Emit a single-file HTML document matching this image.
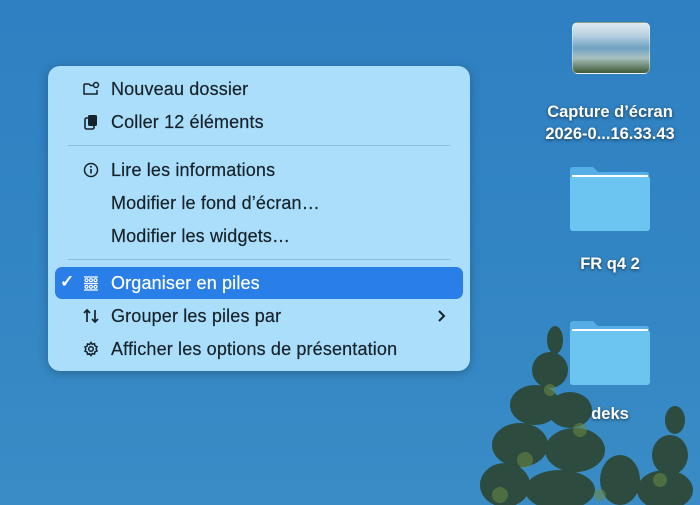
<!DOCTYPE html>
<html><head><meta charset="utf-8"><style>
body{margin:0;width:700px;height:505px;overflow:hidden;position:relative;font-family:"Liberation Sans",sans-serif;background:linear-gradient(180deg,#2f80c2 0%,#3285c3 50%,#3a8cc6 100%)}
.menu{position:absolute;left:48px;top:66px;width:422px;height:305px;background:#abdefa;border-radius:12px;box-shadow:0 2px 10px rgba(0,0,0,.25)}
.it{position:absolute;left:63px;font-size:18px;letter-spacing:0.15px;color:#17232b;height:22px;line-height:22px;-webkit-text-stroke:0.2px #17232b}
.ic{position:absolute;left:34px;width:18px;height:18px}
.sep{position:absolute;left:20px;right:20px;height:1px;background:#8fbcd6}
.hl{position:absolute;left:7px;top:201px;width:408px;height:32px;background:#2a7ee8;border-radius:7px}
.lbl{position:absolute;color:#fff;font-weight:bold;font-size:16.5px;text-align:center;text-shadow:0 1px 3px rgba(0,0,0,.6)}
.folder{position:absolute;width:82px;height:66px}
</style></head><body>
<svg style="position:absolute;left:480px;top:310px" width="220" height="195">
<g fill="#2c4530" opacity=".9">
<ellipse cx="75" cy="30" rx="8" ry="14"/><ellipse cx="70" cy="60" rx="18" ry="18"/><ellipse cx="55" cy="95" rx="25" ry="20"/><ellipse cx="90" cy="100" rx="22" ry="18"/><ellipse cx="40" cy="135" rx="28" ry="22"/><ellipse cx="95" cy="140" rx="30" ry="22"/><ellipse cx="25" cy="175" rx="25" ry="22"/><ellipse cx="80" cy="180" rx="35" ry="20"/><ellipse cx="140" cy="170" rx="20" ry="25"/>
<ellipse cx="195" cy="110" rx="10" ry="14"/><ellipse cx="190" cy="145" rx="18" ry="20"/><ellipse cx="185" cy="180" rx="28" ry="20"/>
</g>
<g fill="#6b8a45" opacity=".55"><circle cx="45" cy="150" r="8"/><circle cx="100" cy="120" r="7"/><circle cx="180" cy="170" r="7"/><circle cx="70" cy="80" r="6"/><circle cx="20" cy="185" r="8"/><circle cx="120" cy="185" r="6"/></g>
</svg>
<div style="position:absolute;left:572px;top:22px;width:76px;height:50px;border-radius:6px;background:linear-gradient(180deg,#dfeaf0 0%,#b7d0e0 25%,#6fa2c2 50%,#a8c0c0 70%,#3f5a35 100%);border:1px solid rgba(255,255,255,.4)"></div>
<div class="lbl" style="left:520px;top:101px;width:180px;line-height:22px">Capture d’écran<br>2026-0...16.33.43</div>
<svg class="folder" style="left:569px;top:166px" viewBox="0 0 82 66"><path d="M1 4q0-3 3-3h20l5 5h48q3 0 3 3v53q0 3-3 3H4q-3 0-3-3z" fill="#55afe6"/><rect x="1" y="10" width="80" height="55" rx="3" fill="#6cc4f1"/><rect x="3" y="9" width="76" height="2" fill="#fff"/></svg>
<div class="lbl" style="left:520px;top:255px;width:180px">FR q4 2</div>
<svg class="folder" style="left:569px;top:320px" viewBox="0 0 82 66"><path d="M1 4q0-3 3-3h20l5 5h48q3 0 3 3v53q0 3-3 3H4q-3 0-3-3z" fill="#55afe6"/><rect x="1" y="10" width="80" height="55" rx="3" fill="#6cc4f1"/><rect x="3" y="9" width="76" height="2" fill="#fff"/></svg>
<div class="lbl" style="left:520px;top:405px;width:180px">deks</div>

<div class="menu">
<svg class="ic" style="top:14px" viewBox="0 0 18 18" fill="none" stroke="#17232b" stroke-width="1.5"><path d="M2 4h5l1.5 1.5H11M2 4v10h13V10"/><circle cx="14" cy="5" r="2.5"/></svg>
<div class="it" style="top:12px">Nouveau dossier</div>
<svg class="ic" style="top:47px" viewBox="0 0 18 18"><rect x="3" y="5" width="9" height="11" rx="1.5" fill="none" stroke="#17232b" stroke-width="1.6"/><rect x="6" y="2" width="9" height="11" rx="1.5" fill="#17232b"/></svg>
<div class="it" style="top:45px">Coller 12 éléments</div>
<div class="sep" style="top:79px"></div>
<svg class="ic" style="top:95px" viewBox="0 0 18 18"><circle cx="9" cy="9" r="6.5" fill="none" stroke="#17232b" stroke-width="1.5"/><rect x="8.2" y="8" width="1.6" height="4.5" fill="#17232b"/><circle cx="9" cy="5.8" r="1" fill="#17232b"/></svg>
<div class="it" style="top:93px">Lire les informations</div>
<div class="it" style="top:126px">Modifier le fond d’écran…</div>
<div class="it" style="top:159px">Modifier les widgets…</div>
<div class="sep" style="top:193px"></div>
<div class="hl"></div>
<div style="position:absolute;left:12px;top:206px;color:#fff;font-size:17px;font-weight:bold">✓</div>
<svg class="ic" style="top:208px" viewBox="0 0 18 18" fill="none" stroke="#fff" stroke-width="1.2"><path d="M2 3h14M2 9.5h14M2 16h14"/><circle cx="4.5" cy="6.2" r="1.5"/><circle cx="9" cy="6.2" r="1.5"/><circle cx="13.5" cy="6.2" r="1.5"/><circle cx="4.5" cy="12.8" r="1.5"/><circle cx="9" cy="12.8" r="1.5"/><circle cx="13.5" cy="12.8" r="1.5"/></svg>
<div class="it" style="top:206px;color:#fff;-webkit-text-stroke:0.2px #fff">Organiser en piles</div>
<svg class="ic" style="top:241px" viewBox="0 0 18 18" fill="none" stroke="#17232b" stroke-width="1.7"><path d="M5 15V3M2 6l3-3 3 3M13 3v12M10 12l3 3 3-3"/></svg>
<div class="it" style="top:239px">Grouper les piles par</div>
<svg style="position:absolute;left:388px;top:243px" width="10" height="14" viewBox="0 0 10 14" fill="none" stroke="#17232b" stroke-width="2"><path d="M3 2l5 5-5 5"/></svg>
<svg class="ic" style="top:274px" viewBox="0 0 18 18" fill="none" stroke="#17232b" stroke-width="1.5"><circle cx="9" cy="9" r="2.3"/><path d="M9 2.5l1.3 1.8 2.2-.6.4 2.2 2.1.9-.9 2.1.9 2.1-2.1.9-.4 2.2-2.2-.6L9 15.5l-1.3-1.8-2.2.6-.4-2.2-2.1-.9.9-2.1-.9-2.1 2.1-.9.4-2.2 2.2.6z"/></svg>
<div class="it" style="top:272px">Afficher les options de présentation</div>
</div>
</body></html>
